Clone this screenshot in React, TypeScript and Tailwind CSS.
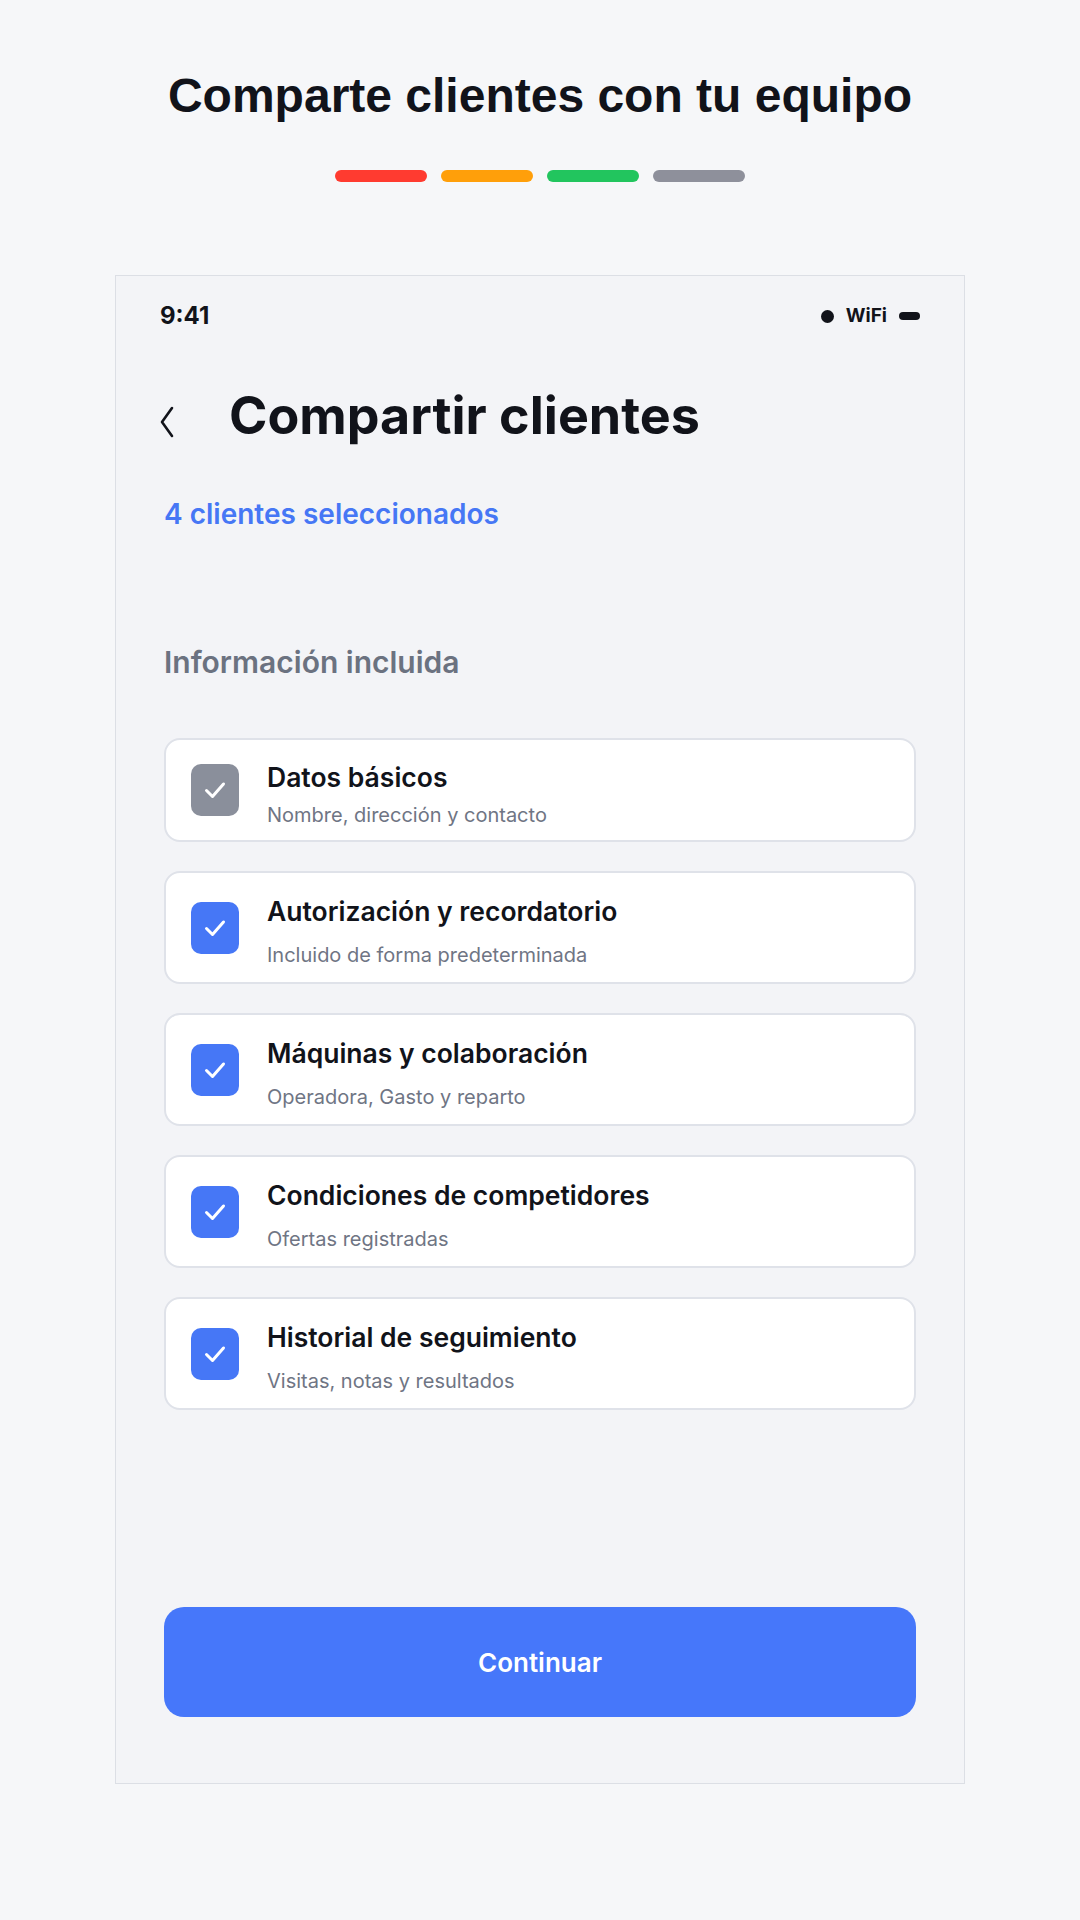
import React from "react";

const items = [
  { title: "Datos básicos", sub: "Nombre, dirección y contacto", locked: true },
  { title: "Autorización y recordatorio", sub: "Incluido de forma predeterminada", locked: false },
  { title: "Máquinas y colaboración", sub: "Operadora, Gasto y reparto", locked: false },
  { title: "Condiciones de competidores", sub: "Ofertas registradas", locked: false },
  { title: "Historial de seguimiento", sub: "Visitas, notas y resultados", locked: false },
];

function Check() {
  return (
    <svg width="24" height="20" viewBox="0 0 24 20" fill="none">
      <path d="M3.5 10.5 L9.5 16.5 L20.5 4" stroke="white" strokeWidth="3" strokeLinecap="round" strokeLinejoin="round" />
    </svg>
  );
}

export default function App() {
  return (
    <div className="min-h-[1920px] w-[1080px] bg-[#f6f7f9] flex flex-col items-center" style={{ fontFamily: "Inter, 'Noto Sans', sans-serif" }}>
      <h1 className="pt-[72px] text-[48px] leading-none font-bold text-[#11131a]" style={{ fontFamily: "'Liberation Sans', Arial, sans-serif" }}>
        Comparte clientes con tu equipo
      </h1>
      <div className="mt-[50px] flex gap-[14px]">
        <div className="w-[92px] h-[12px] rounded-full bg-[#ff3b30]" />
        <div className="w-[92px] h-[12px] rounded-full bg-[#ff9f0a]" />
        <div className="w-[92px] h-[12px] rounded-full bg-[#22c55e]" />
        <div className="w-[92px] h-[12px] rounded-full bg-[#8e909b]" />
      </div>

      <div className="mt-[93px] w-[850px] h-[1509px] border border-[#dcdfe5] bg-[#f3f4f7] flex flex-col">
        <div className="pt-[26px] px-[44px] h-[54px] flex items-end">
          <div className="h-[28px] w-full flex items-center justify-between">
            <span className="text-[24px] font-bold text-[#11131a]">9:41</span>
            <div className="flex items-center gap-[12px]">
              <div className="w-[13px] h-[13px] rounded-full bg-[#11131a]" />
              <span className="text-[19px] font-bold text-[#11131a]">WiFi</span>
              <div className="w-[21px] h-[8px] rounded-full bg-[#11131a]" />
            </div>
          </div>
        </div>

        <div className="mt-[60px] px-[43px] flex items-center">
          <svg width="16" height="32" viewBox="0 0 16 32" fill="none" className="mt-[12px] shrink-0">
            <path d="M13 2 L3 16 L13 30" stroke="#11131a" strokeWidth="2.6" strokeLinecap="round" strokeLinejoin="round" />
          </svg>
          <h2 className="ml-[54px] text-[52px] leading-none font-bold text-[#11131a]">Compartir clientes</h2>
        </div>

        <div className="px-[48px] flex flex-col flex-1">
          <p className="mt-[58px] text-[28px] leading-none font-semibold text-[#4677f5]">4 clientes seleccionados</p>
          <p className="mt-[119px] text-[30px] leading-none font-semibold text-[#6b7280]">Información incluida</p>

          <div className="mt-[61px] flex flex-col gap-[29px]">
            {items.map((it, i) => (
              <div
                key={it.title}
                className={
                  "bg-white border-2 border-[#dfe2e9] rounded-[16px] pl-[25px] pr-[24px] flex items-center gap-[28px] " +
                  (i === 0 ? "h-[104px]" : "h-[113px]")
                }
              >
                <div
                  className={
                    "w-[48px] h-[52px] rounded-[10px] flex items-center justify-center shrink-0 " +
                    (it.locked ? "bg-[#8a8f9b]" : "bg-[#4677f6]")
                  }
                >
                  <Check />
                </div>
                <div className={"flex flex-col " + (i === 0 ? "gap-[10px] mt-[8px]" : "gap-[16px] mt-[6px]")}>
                  <span className="text-[26.5px] leading-[32px] font-semibold text-[#11131a]">{it.title}</span>
                  <span className="text-[20px] leading-[24px] text-[#6f7584]">{it.sub}</span>
                </div>
              </div>
            ))}
          </div>

          <button className="mt-auto mb-[66px] h-[110px] w-full rounded-[20px] bg-[#4677fa] text-white text-[26px] font-semibold">
            Continuar
          </button>
        </div>
      </div>
    </div>
  );
}
